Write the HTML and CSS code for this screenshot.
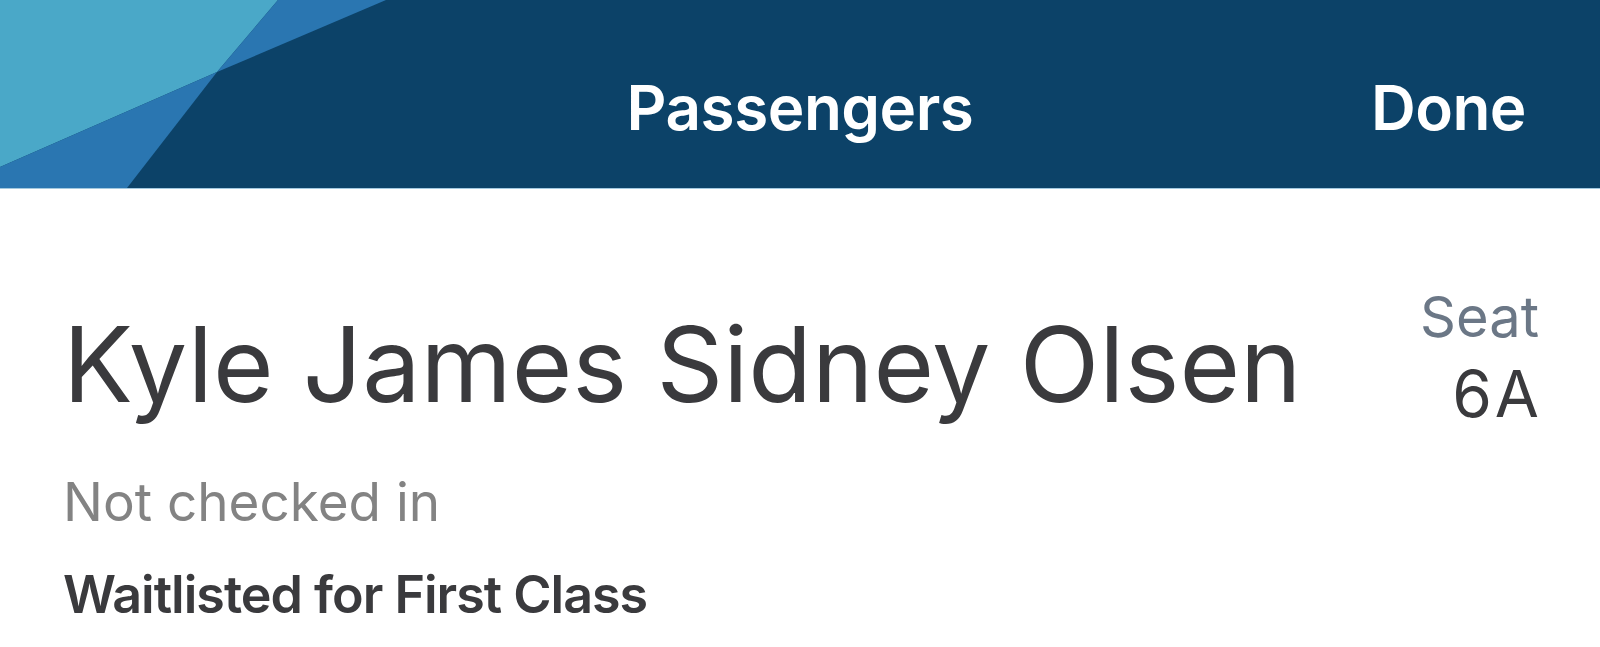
FILE: index.html
```html
<!DOCTYPE html>
<html lang="en">
<head>
    <meta charset="UTF-8">
    <meta name="viewport" content="width=device-width, initial-scale=1.0">
    <title>Passengers</title>
    <link rel="stylesheet" href="styles.css">
</head>
<body>

    <!-- Top bar -->
    <div class="topbar">
        <svg class="topbar-art" width="400" height="188" viewBox="0 0 400 188" aria-hidden="true">
            <polygon points="0,0 278,0 217,72 0,167" fill="#4aa8c8"/>
            <polygon points="278,0 386,0 217,72" fill="#2a76b1"/>
            <polygon points="0,167 217,72 127,188 0,188" fill="#2a76b1"/>
        </svg>
        <div class="topbar-title">Passengers</div>
        <a href="#" class="topbar-done">Done</a>
    </div>

    <div class="passenger">
        <div class="passenger-row">
            <div class="passenger-name">Kyle James Sidney Olsen</div>
            <div class="seat">
                <div class="seat-label">Seat</div>
                <div class="seat-number">6A</div>
            </div>
        </div>
        <div class="passenger-status">Not checked in</div>
        <div class="passenger-upgrade">Waitlisted for First Class</div>
    </div>

</body>
</html>
```

FILE: styles.css
```css
body {
    margin: 0;
    padding: 0;
    background: #fff;
    font-family: 'Inter', 'Liberation Sans', sans-serif;
    color: #3a3a3d;
    overflow: hidden;
}

/* Top bar */
.topbar {
    position: relative;
    height: 188px;
    background-color: #0c4268;
    border-bottom: 1px solid #a3c9e0;
    display: flex;
    align-items: center;
    justify-content: center;
    overflow: hidden;
}

.topbar-art {
    position: absolute;
    top: 0;
    left: 0;
}

.topbar-title {
    position: relative;
    color: #fff;
    font-size: 62px;
    font-weight: 600;
    letter-spacing: -0.5px;
    margin-top: 26px;
}

.topbar-done {
    position: absolute;
    right: 74px;
    top: 50%;
    transform: translateY(-50%);
    margin-top: 13px;
    color: #fff;
    font-size: 62px;
    font-weight: 600;
    letter-spacing: -0.5px;
    text-decoration: none;
}

/* Passenger card */
.passenger {
    padding: 100px 61px 0 63px;
}

.passenger-row {
    display: flex;
    justify-content: space-between;
    align-items: flex-start;
}

.passenger-name {
    font-size: 104px;
    line-height: 1;
    margin-top: 23px;
    color: #3a3a3d;
}

.seat {
    text-align: right;
}

.seat-label {
    font-size: 56px;
    line-height: 1;
    color: #6b7786;
}

.seat-number {
    font-size: 64px;
    line-height: 1;
    margin-top: 17px;
    letter-spacing: 3px;
    margin-right: -3px;
    color: #3a3a3d;
}

.passenger-status {
    font-size: 53px;
    line-height: 1;
    margin-top: 50px;
    color: #838383;
}

.passenger-upgrade {
    font-size: 52px;
    font-weight: 600;
    letter-spacing: -1px;
    line-height: 1;
    margin-top: 40px;
    color: #3a3a3d;
}
```
